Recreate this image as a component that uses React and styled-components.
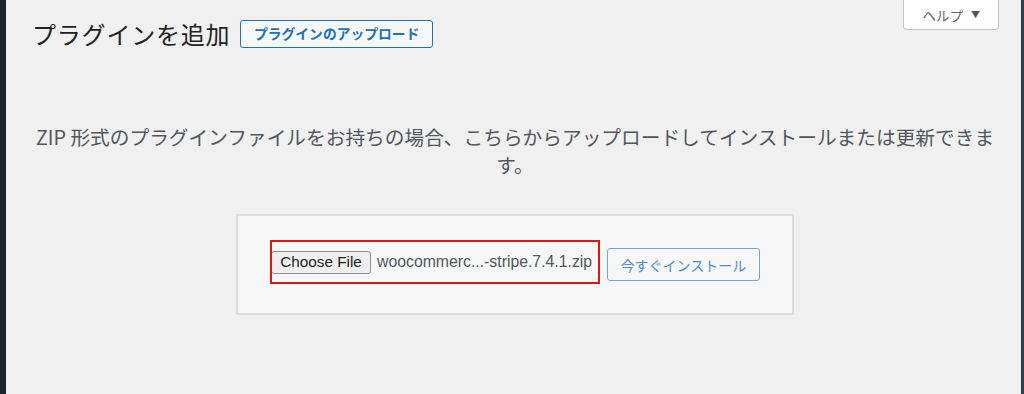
import styled, { createGlobalStyle } from "styled-components";

const GlobalStyle = createGlobalStyle`
  html, body, #root {
    margin: 0;
    padding: 0;
    height: 100%;
  }
  body {
    background: #f0f0f1;
    font-family: "Liberation Sans", "Noto Sans CJK JP", sans-serif;
    -webkit-font-smoothing: antialiased;
  }
`;

export default function App() {
  return (
    <>
      <GlobalStyle />
      <Shell>
        <SideEdge />
        <Main>
          <Header>
            <TitleRow>
              <Title>プラグインを追加</Title>
              <UploadToggle>プラグインのアップロード</UploadToggle>
            </TitleRow>
            <HelpTab>
              ヘルプ <Caret>▼</Caret>
            </HelpTab>
          </Header>

          <InstallHelp>
            ZIP 形式のプラグインファイルをお持ちの場合、こちらからアップロードしてインストールまたは更新できます。
          </InstallHelp>

          <UploadForm>
            <Highlight>
              <ChooseButton>Choose File</ChooseButton>
              <FileName>woocommerc...-stripe.7.4.1.zip</FileName>
            </Highlight>
            <InstallButton>今すぐインストール</InstallButton>
          </UploadForm>
        </Main>
        <RightEdge />
      </Shell>
    </>
  );
}

const Shell = styled.div`
  display: flex;
  min-height: 100vh;
  background: #f0f0f1;
`;

const SideEdge = styled.div`
  width: 6px;
  flex-shrink: 0;
  background: #1d2327;
`;

const RightEdge = styled.div`
  width: 3px;
  flex-shrink: 0;
  background: #343b4d;
`;

const Main = styled.div`
  flex: 1;
  display: flex;
  flex-direction: column;
  padding: 0 21px 0 24px;
`;

const Header = styled.div`
  display: flex;
  justify-content: space-between;
  align-items: flex-start;
`;

const TitleRow = styled.div`
  display: flex;
  align-items: center;
  gap: 10px;
  padding: 20px 0 0 2px;
`;

const Title = styled.h1`
  margin: 0;
  font-family: "Noto Sans CJK JP", sans-serif;
  font-size: 24px;
  font-weight: 400;
  letter-spacing: 0.8px;
  line-height: 26px;
  color: #1d2327;
`;

const UploadToggle = styled.button`
  height: 28px;
  padding: 0 12.5px;
  background: #f6f7f7;
  border: 1.5px solid #2271b1;
  border-radius: 3px;
  color: #2271b1;
  font-family: "Noto Sans CJK JP", sans-serif;
  font-size: 13.8px;
  font-weight: 700;
  line-height: 1;
`;

const HelpTab = styled.div`
  display: flex;
  align-items: center;
  gap: 8px;
  height: 29px;
  padding: 0 18px;
  margin-right: 1px;
  background: #fff;
  border: 1px solid #c3c4c7;
  border-top: none;
  border-radius: 0 0 4px 4px;
  color: #646970;
  font-family: "Noto Sans CJK JP", sans-serif;
  font-size: 13.5px;
`;

const Caret = styled.span`
  font-size: 9px;
  color: #50575e;
`;

const InstallHelp = styled.p`
  max-width: 972px;
  margin: 75px auto 0;
  text-align: center;
  font-family: "Noto Sans CJK JP", sans-serif;
  font-size: 19.7px;
  line-height: 28px;
  color: #50575e;
`;

const UploadForm = styled.div`
  align-self: center;
  display: flex;
  align-items: center;
  gap: 7px;
  width: 558px;
  height: 101px;
  box-sizing: border-box;
  margin-top: 35px;
  padding: 0 32px;
  background: #f6f7f7;
  border: 2px solid #dcdcde;
`;

const Highlight = styled.div`
  display: flex;
  align-items: center;
  gap: 6px;
  width: 330px;
  height: 44px;
  box-sizing: border-box;
  margin-top: -5px;
  border: 2px solid #e0150c;
  overflow: hidden;
`;

const ChooseButton = styled.button`
  height: 23px;
  width: 100px;
  margin-left: -1px;
  padding: 0;
  background: #efefef;
  border: 1px solid #8f8f8f;
  border-radius: 3px;
  color: #1d2327;
  font-family: "Liberation Sans", sans-serif;
  font-size: 15.3px;
`;

const FileName = styled.span`
  font-family: "Liberation Sans", sans-serif;
  font-size: 15.8px;
  color: #50575e;
  white-space: nowrap;
`;

const InstallButton = styled.button`
  height: 33px;
  width: 153px;
  padding: 0;
  background: #f6f7f7;
  border: 1px solid #74a7d9;
  border-radius: 3px;
  color: #4b8ccb;
  font-family: "Noto Sans CJK JP", sans-serif;
  font-size: 14px;
`;
